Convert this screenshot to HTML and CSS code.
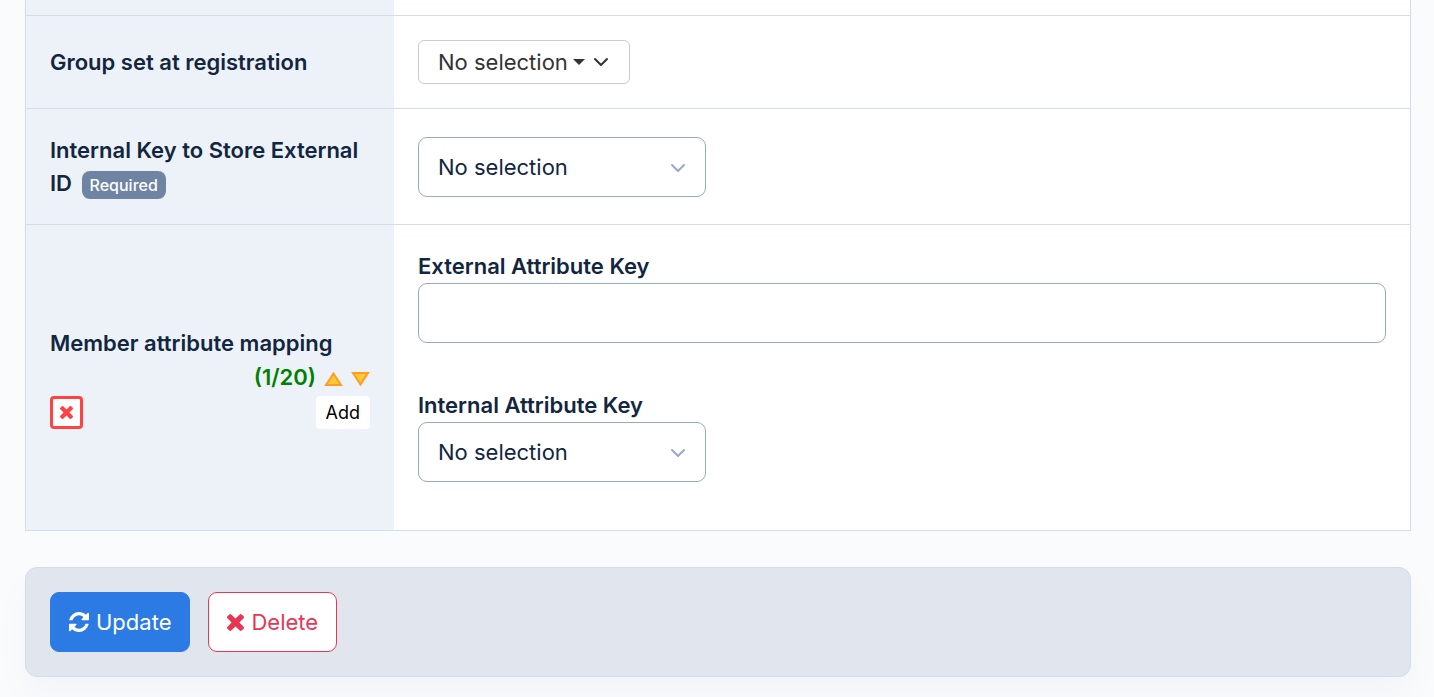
FILE: index.html
```html
<!DOCTYPE html>
<html lang="en">
<head>
  <meta charset="UTF-8" />
  <meta name="viewport" content="width=device-width, initial-scale=1" />
  <title>Member registration settings</title>
  <link rel="stylesheet" href="styles.css">
</head>
<body>
  <form>
    <table class="settings">
      <tr class="spacer">
        <th></th>
        <td></td>
      </tr>
      <tr>
        <th scope="row">Group set at registration</th>
        <td>
          <button type="button" class="dropdown">
            No selection
            <span class="caret"></span>
            <svg class="chevron" viewBox="0 0 16 10"><path d="M2 2l6 6 6-6" /></svg>
          </button>
        </td>
      </tr>
      <tr class="key-row">
        <th scope="row">
          <label for="storeKey">Internal Key to Store External ID</label>
          <span class="badge">Required</span>
        </th>
        <td>
          <div class="select">
            <select id="storeKey">
              <option>No selection</option>
            </select>
            <svg class="chevron" viewBox="0 0 16 10"><path d="M2 2l6 6 6-6" /></svg>
          </div>
        </td>
      </tr>
      <tr>
        <th scope="row">
          Member attribute mapping
          <div class="counter">
            <span>(1/20)</span>
            <button type="button" class="move" aria-label="Move up">
              <svg viewBox="0 0 18 14"><path d="M9 1.5L16.5 13h-15z" /></svg>
            </button>
            <button type="button" class="move" aria-label="Move down">
              <svg viewBox="0 0 18 14"><path d="M9 12.5L1.5 1h15z" /></svg>
            </button>
          </div>
          <div class="row-tools">
            <button type="button" class="remove" aria-label="Remove">
              <svg viewBox="110 366 1188 1188"><path d="M1298 1322q0 40-28 68l-136 136q-28 28-68 28t-68-28l-294-294-294 294q-28 28-68 28t-68-28l-136-136q-28-28-28-68t28-68l294-294-294-294q-28-28-28-68t28-68l136-136q28-28 68-28t68 28l294 294 294-294q28-28 68-28t68 28l136 136q28 28 28 68t-28 68l-294 294 294 294q28 28 28 68z" /></svg>
            </button>
            <button type="button" class="add">Add</button>
          </div>
        </th>
        <td>
          <div class="fields">
            <div>
              <label class="field-label" for="externalKey">External Attribute Key</label>
              <input type="text" id="externalKey" />
            </div>
            <div>
              <label class="field-label" for="internalKey">Internal Attribute Key</label>
              <div class="select">
                <select id="internalKey">
                  <option>No selection</option>
                </select>
                <svg class="chevron" viewBox="0 0 16 10"><path d="M2 2l6 6 6-6" /></svg>
              </div>
            </div>
          </div>
        </td>
      </tr>
    </table>

    <div class="actions">
      <button type="submit" class="btn btn-update">
        <svg class="icon-refresh" viewBox="128 128 1536 1536"><path d="M1639 1056q0 5-1 7-64 268-268 434.5t-478 166.5q-146 0-282.5-55t-243.5-157l-129 129q-19 19-45 19t-45-19-19-45v-448q0-26 19-45t45-19h448q26 0 45 19t19 45-19 45l-137 137q71 66 161 102t187 36q134 0 250-65t186-179q11-17 53-117 8-23 30-23h192q13 0 22.5 9.5t9.5 22.5zm25-800v448q0 26-19 45t-45 19h-448q-26 0-45-19t-19-45 19-45l138-138q-148-137-349-137-134 0-250 65t-186 179q-11 17-53 117-8 23-30 23h-199q-13 0-22.5-9.5t-9.5-22.5v-7q65-268 270-434.5t480-166.5q146 0 284 55.5t245 156.5l130-129q19-19 45-19t45 19 19 45z" /></svg>
        Update
      </button>
      <button type="button" class="btn btn-delete">
        <svg class="icon-times" viewBox="110 366 1188 1188"><path d="M1298 1322q0 40-28 68l-136 136q-28 28-68 28t-68-28l-294-294-294 294q-28 28-68 28t-68-28l-136-136q-28-28-28-68t28-68l294-294-294-294q-28-28-28-68t28-68l136-136q28-28 68-28t68 28l294 294 294-294q28-28 68-28t68 28l136 136q28 28 28 68t-28 68l-294 294 294 294q28 28 28 68z" /></svg>
        Delete
      </button>
    </div>
  </form>
</body>
</html>
```
FILE: styles.css
```css
* {
  box-sizing: border-box;
}
body {
  margin: 0;
  padding: 0 23px 20px 25px;
  background-color: #f9fbfd;
  color: #12263f;
  font-family: Inter, "Liberation Sans", sans-serif;
  font-size: 22px;
  line-height: 34px;
}
button,
input,
select {
  margin: 0;
  font-family: inherit;
  font-size: 22px;
  line-height: 34px;
  color: inherit;
}
button {
  cursor: pointer;
}
svg {
  display: block;
  fill: currentColor;
}

/* settings table */
.settings {
  width: 100%;
  table-layout: fixed;
  border-collapse: separate;
  border-spacing: 0;
  border: solid #d2ddec;
  border-width: 0 1px;
  background-color: #fff;
}
.settings th,
.settings td {
  padding: 24px;
  border-bottom: 1px solid #d2ddec;
  text-align: left;
  vertical-align: middle;
}
.settings th {
  width: 368px;
  background-color: #edf2f9;
  font-weight: 600;
}
.settings .spacer th,
.settings .spacer td {
  height: 16px;
  padding: 0;
}
.settings .key-row th {
  height: 116px;
  padding-right: 20px;
  line-height: 33px;
}
.badge {
  display: inline-block;
  margin-left: 4px;
  padding: 0 8px;
  border-radius: 8px;
  background-color: #6e84a3;
  color: #fff;
  font-size: 16px;
  font-weight: 500;
  line-height: 28px;
  vertical-align: middle;
}

/* form controls */
.dropdown {
  display: flex;
  align-items: center;
  gap: 5px;
  height: 44px;
  padding: 0 20px 0 19px;
  border: 1px solid #ccc;
  border-radius: 6px;
  background-color: #fff;
  color: #333;
}
.caret {
  border: 6px solid transparent;
  border-top-color: #333;
  border-bottom: 0;
}
.chevron {
  width: 16px;
  height: 10px;
  fill: none;
  stroke: currentColor;
  stroke-width: 2;
  stroke-linecap: round;
  stroke-linejoin: round;
}
.dropdown .chevron {
  margin-left: 3px;
}
.select {
  position: relative;
  width: 288px;
}
.select select,
.fields input {
  display: block;
  width: 100%;
  height: 60px;
  padding: 0 19px;
  border: 1px solid #95aac9;
  border-radius: 9px;
  background-color: #fff;
  appearance: none;
}
.select .chevron {
  position: absolute;
  top: 26px;
  right: 20px;
  color: #95aac9;
  pointer-events: none;
}
.fields {
  display: flex;
  flex-direction: column;
  gap: 45px;
  padding-bottom: 24px;
}
.field-label {
  display: block;
  font-weight: 600;
}

/* mapping row tools */
.counter {
  display: flex;
  justify-content: flex-end;
  align-items: center;
  gap: 8px;
  color: green;
}
.move {
  padding: 4px 0 0;
  border: 0;
  background: none;
}
.move svg {
  width: 19px;
  height: 14px;
  fill: #ffc83d;
  stroke: #ff9d1e;
  stroke-width: 2;
}
.row-tools {
  display: flex;
  justify-content: space-between;
  align-items: center;
  padding-top: 2px;
}
.remove {
  display: flex;
  justify-content: center;
  align-items: center;
  width: 33px;
  height: 33px;
  padding: 0;
  border: 3px solid #ff4343;
  border-radius: 4px;
  background-color: #fff;
  color: #ff4343;
}
.remove svg {
  width: 13px;
  height: 13px;
}
.add {
  height: 33px;
  padding: 0 10px;
  border: 0;
  border-radius: 4px;
  background-color: #fff;
  color: #000;
  font-size: 18px;
}

/* bottom action bar */
.actions {
  display: flex;
  gap: 18px;
  margin-top: 36px;
  padding: 24px;
  border: 1px solid #d2ddec;
  border-radius: 12px;
  background-color: #e1e6ee;
  box-shadow: 0 18px 36px rgba(18, 38, 63, 0.03);
}
.btn {
  display: flex;
  align-items: center;
  gap: 7px;
  height: 60px;
  padding: 0 18px;
  border: 1px solid;
  border-radius: 9px;
}
.btn-update {
  border-color: #2c7be5;
  background-color: #2c7be5;
  color: #fff;
}
.btn-delete {
  border-color: #e63757;
  background-color: #fff;
  color: #e63757;
}
.icon-refresh {
  width: 20px;
  height: 20px;
}
.icon-times {
  width: 17px;
  height: 17px;
}
```
